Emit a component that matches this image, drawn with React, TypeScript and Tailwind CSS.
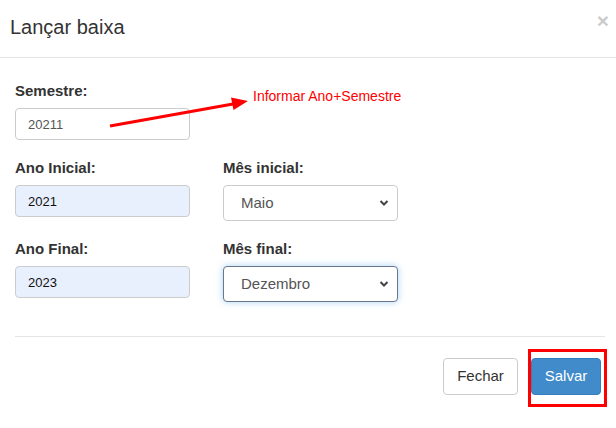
import React from "react"

const font = { fontFamily: '"Liberation Sans", Arial, sans-serif' }

function Chevron() {
    return (
        <svg
            className="absolute right-[9px] top-1/2 -translate-y-1/2 pointer-events-none"
            width="10"
            height="7"
            viewBox="0 0 10 7"
        >
            <path d="M1.5 1.5 L5 5 L8.5 1.5" fill="none" stroke="#444" strokeWidth="2" />
        </svg>
    )
}

function TextField({ label, value, filled }: { label: string; value: string; filled?: boolean }) {
    return (
        <div className="flex flex-col w-[175px]">
            <label className="text-[15px] font-bold text-[#333] leading-[20px] mb-[7px]">{label}</label>
            <input
                readOnly
                value={value}
                className={
                    "h-[32px] rounded-[4px] border border-[#ccc] px-[12px] text-[13px] outline-none " +
                    (filled ? "bg-[#e8f0fe] text-[#111]" : "bg-white text-[#555]")
                }
            />
        </div>
    )
}

function SelectField({ label, value, focused }: { label: string; value: string; focused?: boolean }) {
    return (
        <div className="flex flex-col w-[175px]">
            <label className="text-[15px] font-bold text-[#333] leading-[20px] mb-[7px]">{label}</label>
            <div className="relative">
                <select
                    value={value}
                    onChange={() => {}}
                    className={
                        "appearance-none w-full h-[36px] rounded-[4px] border bg-white pl-[17px] text-[15px] text-[#555] outline-none " +
                        (focused
                            ? "border-[#66788a] shadow-[0_0_7px_rgba(102,175,233,0.55)]"
                            : "border-[#ccc]")
                    }
                >
                    <option>Maio</option>
                    <option>Dezembro</option>
                </select>
                <Chevron />
            </div>
        </div>
    )
}

export default function App() {
    return (
        <div className="w-[616px] h-[428px] bg-white relative overflow-hidden" style={font}>
            <div className="h-[58px] border-b border-[#e5e5e5] flex items-center justify-between pl-[10px] pr-[7px] pb-[3px]">
                <h4 className="text-[20px] text-[#333] leading-none">Lançar baixa</h4>
                <span className="text-[21px] font-bold text-black opacity-20 leading-none -mt-[14px]">×</span>
            </div>

            <div className="px-[15px] pt-[23px]">
                <div className="relative">
                    <TextField label="Semestre:" value="20211" />
                    <svg className="absolute left-[94px] top-[13px]" width="170" height="40" viewBox="0 0 170 40">
                        <line x1="1" y1="32" x2="124" y2="10" stroke="#f00" strokeWidth="3" />
                        <polygon points="139,7 122,3.5 124.5,16" fill="#f00" />
                    </svg>
                    <span className="absolute left-[238px] top-[5px] text-[14px] text-[#f00]">Informar Ano+Semestre</span>
                </div>

                <div className="flex gap-[33px] mt-[18px]">
                    <TextField label="Ano Inicial:" value="2021" filled />
                    <SelectField label="Mês inicial:" value="Maio" />
                </div>

                <div className="flex gap-[33px] mt-[18px]">
                    <TextField label="Ano Final:" value="2023" filled />
                    <SelectField label="Mês final:" value="Dezembro" focused />
                </div>

                <div className="mt-[34px] border-t border-[#e5e5e5] mr-[-4px]" />

                <div className="flex justify-end gap-[13px] pt-[21px]">
                    <button className="h-[37px] w-[75px] rounded-[4px] border border-[#ccc] bg-white text-[15px] text-[#333]">
                        Fechar
                    </button>
                    <div className="relative">
                        <button className="h-[37px] w-[70px] rounded-[4px] border border-[#357ebd] bg-[#428bca] text-[15px] text-white">
                            Salvar
                        </button>
                        <div className="absolute left-[-3px] top-[-9px] w-[79px] h-[58px] border-[3px] border-[#f00]" />
                    </div>
                </div>
            </div>
        </div>
    )
}
